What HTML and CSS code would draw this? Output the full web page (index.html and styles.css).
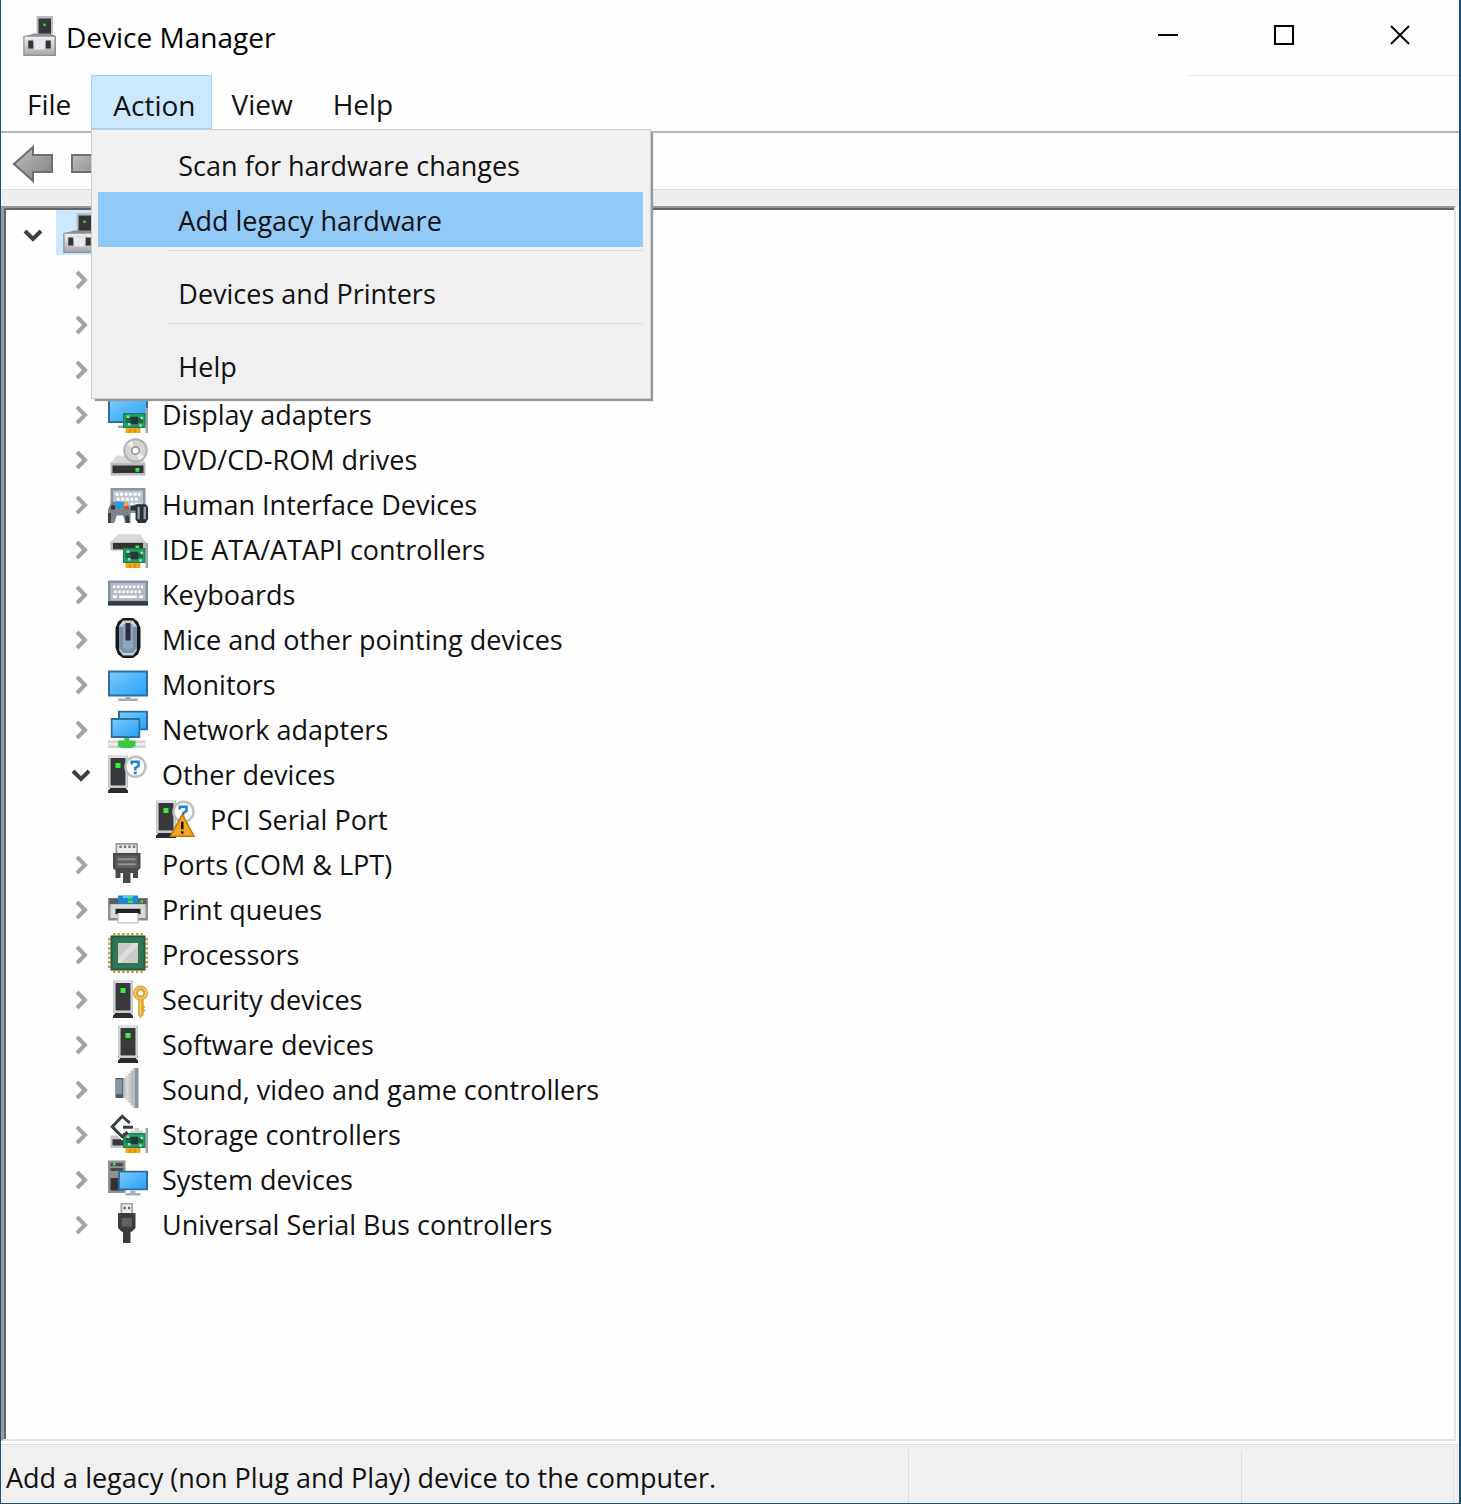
FILE: index.html
```html
<!DOCTYPE html>
<html lang="en">

<head>
    <meta charset="UTF-8">
    <meta name="viewport" content="width=device-width, initial-scale=1.0">
    <title>Device Manager</title>
    <link rel="stylesheet" href="styles.css">
</head>

<body>
    <!-- shared icon parts, 16 x 16 grid -->
    <svg class="sprite" aria-hidden="true">
        <defs>
            <linearGradient id="blue" x1="0" y1="0" x2="1" y2="1">
                <stop offset="0" stop-color="#7cc8fb" />
                <stop offset="1" stop-color="#27a3fa" />
            </linearGradient>
            <linearGradient id="metal" x1="0" y1="0" x2="0" y2="1">
                <stop offset="0" stop-color="#f0f0f2" />
                <stop offset="1" stop-color="#a9a9ad" />
            </linearGradient>
            <linearGradient id="cone" x1="0" y1="0" x2="1" y2="0">
                <stop offset="0" stop-color="#a8acb0" />
                <stop offset="0.4" stop-color="#dcdddf" />
                <stop offset="1" stop-color="#b4b7ba" />
            </linearGradient>
            <linearGradient id="arrow" x1="0" y1="0" x2="1" y2="1">
                <stop offset="0" stop-color="#c4c4c4" />
                <stop offset="1" stop-color="#7c7c7c" />
            </linearGradient>
        </defs>
        <symbol id="closed" viewBox="0 0 20 20">
            <path d="M6 2l8 8-8 8" fill="none" stroke="#a3a3a3" stroke-width="4" />
        </symbol>
        <symbol id="open" viewBox="0 0 20 20">
            <path d="M2 6l8 8 8-8" fill="none" stroke="#404040" stroke-width="4" />
        </symbol>
        <symbol id="computer" viewBox="0 0 16 16">
            <path d="M6.600 0h6.600v7H6.600z" fill="#b9bdc1" />
            <path d="M7.400 1h5v6.400h-5z" fill="#343638" />
            <path d="M9.300 3h1v1h-1z" fill="#2be03a" />
            <path d="M5.500 7h6.500l2.400 1V16H1.300V8l2.700-.5z" fill="#8e8e94" />
            <path d="M1.800 8.300h12v7.200h-12z" fill="url(#metal)" />
            <path d="M5.800 10h4v3.400h-4z" fill="#e9e9f2" />
            <path d="M3.300 9.800h2v3.200h-2zM10.300 9.800h2v3.200h-2z" fill="#333" />
        </symbol>
        <symbol id="board" viewBox="0 0 16 16">
            <path d="M15 6h1v10h-1z" fill="#a2a4a6" />
            <path d="M6 8h9v6H6z" fill="#15834f" />
            <path d="M6.500 8.500h8v5h-8z" fill="#2c9a66" />
            <path d="M7 10h7v2H7z" fill="#156b41" />
            <path d="M9 9.500h3v3H9z" fill="#253a33" />
            <path d="M7.500 9h1v1h-1zM13 9.500h1v1h-1zM8 12h1v1H8zM12.500 12.500h1v1h-1z" fill="#a7d8c0" />
            <path d="M7 14h6v2H7z" fill="#f5a816" />
            <path d="M8.500 14.500h.5V16h-.5zM10.500 14.500h.5V16h-.5z" fill="#c77f08" />
        </symbol>
        <symbol id="tower" viewBox="0 0 8 16">
            <path d="M0 1h8v13H0z" fill="#c3c8cc" />
            <path d="M.6 1.300h6.800v12H.6z" fill="#dfe3e6" />
            <path d="M1 2h6v11H1z" fill="#37393b" />
            <path d="M3 4h2v2H3z" fill="#35ee3d" />
            <path d="M1 14h6l1 1v1H0v-1z" fill="#2b2b2b" />
        </symbol>
        <symbol id="screen" viewBox="0 0 12 8">
            <path d="M0 0h12v8H0z" fill="#2c6f9d" />
            <path d="M.8.8h10.400v6.400H.8z" fill="url(#blue)" />
        </symbol>
        <symbol id="help" viewBox="0 0 16 16">
            <circle cx="11" cy="5.500" r="4" fill="#fff" stroke="#bcc0c3" stroke-width="1" />
            <path d="M9.500 4.600V3.500h2.700v1.700l-1.300.8v1M10.300 8h1.200" fill="none" stroke="#2181c4" stroke-width="1" />
        </symbol>
    </svg>

    <div class="window">
        <header class="title-bar">
            <svg class="icon"><use href="#computer" /></svg>
            <h1 class="title">Device Manager</h1>
            <div class="window-buttons">
                <button class="window-button" aria-label="Minimize">
                    <svg class="glyph" viewBox="0 0 22 22"><path d="M1 11h20" /></svg>
                </button>
                <button class="window-button" aria-label="Maximize">
                    <svg class="glyph" viewBox="0 0 22 22"><path d="M2 2h18v18H2z" /></svg>
                </button>
                <button class="window-button" aria-label="Close">
                    <svg class="glyph" viewBox="0 0 22 22"><path d="M2 2l18 18M20 2L2 20" /></svg>
                </button>
            </div>
        </header>

        <nav class="menu-bar">
            <button class="menu-button">File</button>
            <div class="menu">
                <button class="menu-button active" aria-expanded="true">Action</button>
                <div class="dropdown">
                    <button class="dropdown-item">Scan for hardware changes</button>
                    <button class="dropdown-item selected">Add legacy hardware</button>
                    <hr class="separator">
                    <button class="dropdown-item">Devices and Printers</button>
                    <hr class="separator">
                    <button class="dropdown-item">Help</button>
                </div>
            </div>
            <button class="menu-button">View</button>
            <button class="menu-button">Help</button>
        </nav>

        <div class="toolbar">
            <button class="tool-button" aria-label="Back">
                <svg class="arrow" viewBox="0 0 42 38">
                    <path d="M2 19L21 2v8h19v17H21v9z" />
                </svg>
            </button>
            <button class="tool-button" aria-label="Forward">
                <svg class="arrow" viewBox="0 0 42 38">
                    <path d="M41 19L24 2v8H2v17h22v9z" />
                </svg>
            </button>
        </div>

        <main class="tree">
            <div class="row">
                <button class="toggle" aria-label="Collapse"><svg><use href="#open" /></svg></button>
                <span class="label selected"><svg class="icon"><use href="#computer" /></svg></span>
            </div>
            <ul class="branch">
                <li class="row"><button class="toggle" aria-label="Expand"><svg><use href="#closed" /></svg></button></li>
                <li class="row"><button class="toggle" aria-label="Expand"><svg><use href="#closed" /></svg></button></li>
                <li class="row"><button class="toggle" aria-label="Expand"><svg><use href="#closed" /></svg></button></li>
                <li class="row">
                    <button class="toggle" aria-label="Expand"><svg><use href="#closed" /></svg></button>
                    <span class="label">
                        <svg class="icon" viewBox="0 0 16 16">
                            <path d="M0 2h16v10H0z" fill="#2c6f9d" />
                            <path d="M.8 2.800h14.400v8.400H.8z" fill="url(#blue)" />
                            <path d="M4 13h5v1H4z" fill="#8fa5b5" />
                            <use href="#board" />
                        </svg>
                        Display adapters
                    </span>
                </li>
                <li class="row">
                    <button class="toggle" aria-label="Expand"><svg><use href="#closed" /></svg></button>
                    <span class="label">
                        <svg class="icon" viewBox="0 0 16 16">
                            <path d="M3.500 7h9L15 10H1z" fill="#d9d9db" />
                            <path d="M1 10h14v5H1z" fill="#b9bbbd" />
                            <path d="M1.800 11h12.400v3H1.800z" fill="#333" />
                            <path d="M11 12h1.500v1.500H11z" fill="#35ee3d" />
                            <circle cx="11" cy="5" r="4.500" fill="#d3d5d6" stroke="#aeb0b1" stroke-width=".8" />
                            <path d="M11 5L7.500 2.500 9.500 1zM11 5l3.500 2.500-2 1.500z" fill="#eee" />
                            <circle cx="11" cy="5" r="1.500" fill="#fff" stroke="#999" stroke-width=".7" />
                        </svg>
                        DVD/CD-ROM drives
                    </span>
                </li>
                <li class="row">
                    <button class="toggle" aria-label="Expand"><svg><use href="#closed" /></svg></button>
                    <span class="label">
                        <svg class="icon" viewBox="0 0 16 16">
                            <path d="M1 2h14v10H1z" fill="#8a96a3" />
                            <path d="M2 3h12v8H2z" fill="#bcc4cc" />
                            <path d="M3 4.500h10M3.500 6.500h9M9 8.500h4" stroke="#fff" stroke-width="1.200" stroke-dasharray="1.200 .6" />
                            <path d="M1.500 7.500h6l1.500 3V16H7l-1-3H3.500l-1 3H0v-5.500z" fill="#7b838b" />
                            <path d="M0 12h1.200v4H0zM7 13h1.500v3H7z" fill="#3c4046" />
                            <path d="M1.200 9h1.600v1.600H1.200z" fill="#333" />
                            <path d="M3 7.500h3v2.500H3z" fill="#1e9cf5" />
                            <path d="M6.500 7.700h1.300v1.500H6.500z" fill="#f7b53a" />
                            <path d="M6.800 9.200h1.300v1.300H6.800z" fill="#e0432c" />
                            <path d="M9 9h3v2H9zM11 8.500h4l1 1v5L15 16h-3l-1-1.500z" fill="#2b2f35" />
                            <path d="M11.800 9.500h.9v5h-.9zM14.200 9.500h1v5h-1z" fill="#8ba1b7" />
                        </svg>
                        Human Interface Devices
                    </span>
                </li>
                <li class="row">
                    <button class="toggle" aria-label="Expand"><svg><use href="#closed" /></svg></button>
                    <span class="label">
                        <svg class="icon" viewBox="0 0 16 16">
                            <path d="M4 2.500h9L15 5.500H1z" fill="#d9d9db" />
                            <path d="M1 5.500h14V9H1z" fill="#b5b7b9" />
                            <path d="M2 6h12v2.500H2z" fill="#333" />
                            <path d="M11 7h1.500v1H11z" fill="#35ee3d" />
                            <use href="#board" />
                        </svg>
                        IDE ATA/ATAPI controllers
                    </span>
                </li>
                <li class="row">
                    <button class="toggle" aria-label="Expand"><svg><use href="#closed" /></svg></button>
                    <span class="label">
                        <svg class="icon" viewBox="0 0 16 16">
                            <path d="M0 3h16v10H0z" fill="#8592a0" />
                            <path d="M1 4h14v7H1z" fill="#b4bdc6" />
                            <path d="M2 5.500h12M2.500 7.500h11" stroke="#fff" stroke-width="1" stroke-dasharray="1 .6" />
                            <path d="M2 9.500h1.500M4.500 9.500h7M12.500 9.500H14" stroke="#fff" stroke-width="1" />
                            <path d="M0 11.300h16V13H0z" fill="#32383f" />
                        </svg>
                        Keyboards
                    </span>
                </li>
                <li class="row">
                    <button class="toggle" aria-label="Expand"><svg><use href="#closed" /></svg></button>
                    <span class="label">
                        <svg class="icon" viewBox="0 0 16 16">
                            <path d="M6 0h4l2 1.500 1 2.500v8l-1 2.500-2 1.500H6l-2-1.500L3 12V4l1-2.500z" fill="#17191b" />
                            <path d="M6 1h4l1.500 2v10L10 15H6l-1.500-2V3z" fill="#c8ced5" />
                            <path d="M4.500 3.500h7V12L10 14H6l-1.500-2z" fill="#7690ab" />
                            <path d="M6 2.500h4V12l-2 1-2-1z" fill="#8fa4ba" />
                            <path d="M7 2h2v7H7z" fill="#2c3036" />
                        </svg>
                        Mice and other pointing devices
                    </span>
                </li>
                <li class="row">
                    <button class="toggle" aria-label="Expand"><svg><use href="#closed" /></svg></button>
                    <span class="label">
                        <svg class="icon" viewBox="0 0 16 16">
                            <path d="M0 3h16v10.400H0z" fill="#2c6f9d" />
                            <path d="M.8 3.800h14.400v8.800H.8z" fill="url(#blue)" />
                            <path d="M7 13.400h2v.8h3v1H4v-1h3z" fill="#9db2c1" />
                        </svg>
                        Monitors
                    </span>
                </li>
                <li class="row">
                    <button class="toggle" aria-label="Expand"><svg><use href="#closed" /></svg></button>
                    <span class="label">
                        <svg class="icon" viewBox="0 0 16 16">
                            <use href="#screen" x="4" y="1" width="12" height="8" />
                            <use href="#screen" x="1" y="4" width="12" height="8" />
                            <path d="M0 13h15v3H0z" fill="#d2d2d2" />
                            <path d="M0 14h15v1H0z" fill="#eee" />
                            <path d="M6.500 12h2v1H11v2.500h-1v.5H5v-.5H4V13h2.500z" fill="#3fc548" />
                        </svg>
                        Network adapters
                    </span>
                </li>
                <li>
                    <div class="row">
                        <button class="toggle" aria-label="Collapse"><svg><use href="#open" /></svg></button>
                        <span class="label">
                            <svg class="icon" viewBox="0 0 16 16">
                                <use href="#tower" x="0" y="0" width="8" height="16" />
                                <use href="#help" />
                            </svg>
                            Other devices
                        </span>
                    </div>
                    <ul class="branch">
                        <li class="row leaf">
                            <span class="label">
                                <svg class="icon" viewBox="0 0 16 16">
                                    <use href="#tower" x="0" y="0" width="8" height="16" />
                                    <use href="#help" />
                                    <path d="M10.500 6.500l4.700 8.800H5.800z" fill="#f6a71c" stroke="#b8770f" stroke-width=".6" />
                                    <path d="M10 9.500h1v3h-1zM10 13.300h1v1h-1z" fill="#111" />
                                </svg>
                                PCI Serial Port
                            </span>
                        </li>
                    </ul>
                </li>
                <li class="row">
                    <button class="toggle" aria-label="Expand"><svg><use href="#closed" /></svg></button>
                    <span class="label">
                        <svg class="icon" viewBox="0 0 16 16">
                            <path d="M3 0h9v4H3z" fill="#9a9a9a" />
                            <path d="M3.700.7h7.600V4H3.700z" fill="#ececec" />
                            <path d="M4.500 1.500h6.500" stroke="#777" stroke-width="1" stroke-dasharray="1 .8" />
                            <path d="M2 4h11v6l-1 1v3h-2v-2H9v4H6v-4H5v2H3v-3l-1-1z" fill="#47494b" />
                            <path d="M3 5h9v5H3z" fill="#5d5f61" />
                            <path d="M4 6.500h7M4 8.500h7" stroke="#929496" stroke-width=".8" />
                        </svg>
                        Ports (COM &amp; LPT)
                    </span>
                </li>
                <li class="row">
                    <button class="toggle" aria-label="Expand"><svg><use href="#closed" /></svg></button>
                    <span class="label">
                        <svg class="icon" viewBox="0 0 16 16">
                            <path d="M0 4h16v9H0z" fill="#8d9093" />
                            <path d="M.5 4.200h15V6.500H.5z" fill="#5c6063" />
                            <path d="M1 6.500h14V12H1z" fill="#d8dadb" />
                            <path d="M4 3h8v3.300H4z" fill="#1d86d6" />
                            <path d="M6 3h4v1H6z" fill="#63c3f7" />
                            <path d="M8 3.500h1.500v1H8zM8 5h2v1H8zM13 5h1v1h-1z" fill="#39e34a" />
                            <path d="M3 8.300h10v2.200H3z" fill="#222" />
                            <path d="M3.800 10h8.400v4.200H3.800z" fill="#c5c5c5" />
                            <path d="M4.300 10h7.400v3.700H4.300z" fill="#fff" />
                        </svg>
                        Print queues
                    </span>
                </li>
                <li class="row">
                    <button class="toggle" aria-label="Expand"><svg><use href="#closed" /></svg></button>
                    <span class="label">
                        <svg class="icon" viewBox="0 0 16 16">
                            <path d="M2 .5h12M2 15.500h12M.5 2v12M15.500 2v12" stroke="#d39a3c" stroke-width="1" stroke-dasharray="1 .83" />
                            <path d="M1 1h14v14H1z" fill="#1b5c3d" />
                            <path d="M1.800 1.800h12.400v12.400H1.800z" fill="#2f7656" />
                            <path d="M4 4h8v8H4z" fill="#c9cccb" />
                            <path d="M4 10l6-6h2v1l-7 7H4z" fill="#dcdedd" />
                        </svg>
                        Processors
                    </span>
                </li>
                <li class="row">
                    <button class="toggle" aria-label="Expand"><svg><use href="#closed" /></svg></button>
                    <span class="label">
                        <svg class="icon" viewBox="0 0 16 16">
                            <use href="#tower" x="2" y="0" width="8" height="16" />
                            <path d="M12 8.500h2.300V11l.7.600-.7.700.7.700-.7.700v1L13 16l-1-1z" fill="#dda32f" />
                            <path d="M12.600 8h.7v7h-.7z" fill="#f5cf70" />
                            <circle cx="13" cy="6" r="2" fill="none" stroke="#dda32f" stroke-width="2" />
                            <circle cx="13" cy="6" r="2.200" fill="none" stroke="#f3c863" stroke-width=".7" />
                        </svg>
                        Security devices
                    </span>
                </li>
                <li class="row">
                    <button class="toggle" aria-label="Expand"><svg><use href="#closed" /></svg></button>
                    <span class="label">
                        <svg class="icon" viewBox="0 0 16 16">
                            <use href="#tower" x="4" y="0" width="8" height="16" />
                        </svg>
                        Software devices
                    </span>
                </li>
                <li class="row">
                    <button class="toggle" aria-label="Expand"><svg><use href="#closed" /></svg></button>
                    <span class="label">
                        <svg class="icon" viewBox="0 0 16 16">
                            <path d="M3 4h3.500v8H3z" fill="#4f5b66" />
                            <path d="M3 4.500h2.700v6H3z" fill="#8795a2" />
                            <path d="M6 4h1V3h1V2h1V1h1v14H9v-1H8v-1H7v-1H6z" fill="url(#cone)" />
                            <path d="M10 0h2.200v16H10z" fill="#8393a2" />
                            <path d="M10 0h.8v16H10z" fill="#b6bfc7" />
                        </svg>
                        Sound, video and game controllers
                    </span>
                </li>
                <li class="row">
                    <button class="toggle" aria-label="Expand"><svg><use href="#closed" /></svg></button>
                    <span class="label">
                        <svg class="icon" viewBox="0 0 16 16">
                            <path d="M9 8V7h1.500V6h2v1H14v1z" fill="#cfd1d4" />
                            <path d="M1 9h6v5H1z" fill="#c3c5c8" />
                            <path d="M1.800 10.500H6V13H1.800z" fill="#3a3a3a" />
                            <path d="M8.700 4L5.700 1.300 1.700 5.500l4 4L7.800 7.600M6 5.700h4" fill="none" stroke="#fff" stroke-width="2.200" />
                            <use href="#board" />
                            <path d="M8.700 4L5.700 1.300 1.700 5.500l4 4L7.800 7.600M6 5.700h4" fill="none" stroke="#3a3c3e" stroke-width="1.200" />
                        </svg>
                        Storage controllers
                    </span>
                </li>
                <li class="row">
                    <button class="toggle" aria-label="Expand"><svg><use href="#closed" /></svg></button>
                    <span class="label">
                        <svg class="icon" viewBox="0 0 16 16">
                            <path d="M0 1h7v13H0z" fill="#8f9295" />
                            <path d="M1 2h5v1.300H1zM1 4h5v1.200H1z" fill="#4a4c4e" />
                            <path d="M1 8h5v5H1z" fill="#333" />
                            <path d="M2 2h1v1H2z" fill="#35ee3d" />
                            <use href="#screen" x="4" y="5" width="12" height="8" />
                            <path d="M9 13h2v1h2v1H7v-1h2z" fill="#9db2c1" />
                        </svg>
                        System devices
                    </span>
                </li>
                <li class="row">
                    <button class="toggle" aria-label="Expand"><svg><use href="#closed" /></svg></button>
                    <span class="label">
                        <svg class="icon" viewBox="0 0 16 16">
                            <path d="M5 0h5v4H5z" fill="#a3a3a3" />
                            <path d="M5.700.6h3.600V4H5.700z" fill="#eee" />
                            <path d="M6.200 1.500h.9v1h-.9zM8 1.500h.9v1H8z" fill="#666" />
                            <path d="M4 4h7v6l-1.500 1.500H9V16H6v-4.500h-.5L4 10z" fill="#3c3d3f" />
                            <path d="M5.500 6h4v3.500h-4z" fill="#5f6163" />
                        </svg>
                        Universal Serial Bus controllers
                    </span>
                </li>
            </ul>
        </main>

        <footer class="status-bar">
            <span class="status-text">Add a legacy (non Plug and Play) device to the computer.</span>
            <span class="status-cell"></span>
            <span class="status-cell small"></span>
        </footer>
    </div>
</body>

</html>
```

FILE: styles.css
```css
* {
    box-sizing: border-box;
}

body {
    margin: 0;
    font-family: "Open Sans", "Noto Sans", sans-serif;
    font-size: 27px;
    line-height: 40px;
    color: #111;
}

button {
    padding: 0;
    border: none;
    background: none;
    font: inherit;
    color: inherit;
}

.sprite {
    display: block;
    width: 0;
    height: 0;
}

.window {
    display: flex;
    flex-direction: column;
    min-height: 100vh;
    border: 1px solid #1c4f70;
    border-top: none;
    border-right-width: 2px;
    background-color: #fefefe;
}

.icon {
    flex: none;
    width: 40px;
    height: 40px;
}

/* title bar */
.title-bar {
    display: flex;
    align-items: center;
    height: 75px;
    padding: 0 1px 3px 19px;
}

.title {
    flex: 1;
    margin: 0;
    padding: 2px 0 0 6px;
    font-size: 28px;
    font-weight: normal;
    color: #000;
}

.window-buttons {
    display: flex;
    align-self: stretch;
}

.window-button {
    display: flex;
    align-items: center;
    justify-content: center;
    width: 116px;
    height: 70px;
}

.glyph {
    width: 22px;
    height: 22px;
    fill: none;
    stroke: #000;
    stroke-width: 2;
}

/* menu bar */
.menu-bar {
    display: flex;
    height: 58px;
    padding-left: 6px;
    border-bottom: 2px solid #b4b4b4;
    background: linear-gradient(#e2e2e2, #e2e2e2) top right / 270px 1px no-repeat;
    font-size: 28px;
}

.menu-button {
    height: 54px;
    padding: 4px 20px 0;
    line-height: 50px;
}

.menu-button.active {
    padding: 6px 15px 0 21px;
    border: 1px solid #99d1ff;
    background-color: #cce8ff;
    line-height: 46px;
}

.menu {
    position: relative;
}

.dropdown {
    position: absolute;
    z-index: 1;
    top: 54px;
    left: 0;
    display: flex;
    flex-direction: column;
    width: 560px;
    padding: 7px 7px 5px 6px;
    border: 1px solid #ccc;
    background-color: #f0f0f0;
    box-shadow: 3px 3px 1px -1px #999;
    font-size: 27px;
}

.dropdown-item {
    height: 55px;
    padding: 2px 0 0 80px;
    text-align: left;
}

.dropdown-item.selected {
    background-color: #91c9f7;
}

.separator {
    align-self: stretch;
    height: 1px;
    margin: 3px 0 14px 70px;
    border: none;
    background-color: #d9d9d9;
}

/* toolbar */
.toolbar {
    display: flex;
    align-items: center;
    gap: 16px;
    height: 73px;
    padding: 4px 0 0 11px;
    border-bottom: 16px solid #efefef;
    box-shadow: inset 0 -1px #ddd;
}

.tool-button {
    display: flex;
}

.arrow {
    width: 42px;
    height: 38px;
    fill: url(#arrow);
    stroke: #6e6e6e;
    stroke-width: 2;
}

/* device tree */
.tree {
    flex: 1;
    margin: 0 3px 3px 0;
    padding: 2px 0 0 19px;
    border: 2px solid #e3e3e3;
    border-top: 2px solid #999;
    border-left: 3px solid #999;
    box-shadow: inset 2px 2px #666;
}

.branch {
    margin: 0;
    padding-left: 48px;
    list-style: none;
}

.row {
    display: flex;
    align-items: center;
    gap: 13px;
    height: 45px;
}

.leaf {
    padding-left: 33px;
}

.toggle {
    width: 20px;
    height: 20px;
    margin-top: 5px;
}

.toggle svg {
    display: block;
    width: 20px;
    height: 20px;
}

.label {
    display: flex;
    align-items: center;
    gap: 14px;
    height: 45px;
    padding: 4px 4px 0;
}

.label .icon {
    margin-bottom: 4px;
}

.label.selected {
    background-color: #cce8ff;
}

/* status bar */
.status-bar {
    display: flex;
    height: 59px;
    padding: 5px 5px 0;
    border-top: 1px solid #ddd;
    background-color: #f0f0f0;
}

.status-text {
    flex: 1;
    line-height: 56px;
}

.status-cell {
    width: 333px;
    border-left: 1px solid #ddd;
}

.status-cell.small {
    width: 213px;
    border-right: 1px solid #ddd;
}
```
